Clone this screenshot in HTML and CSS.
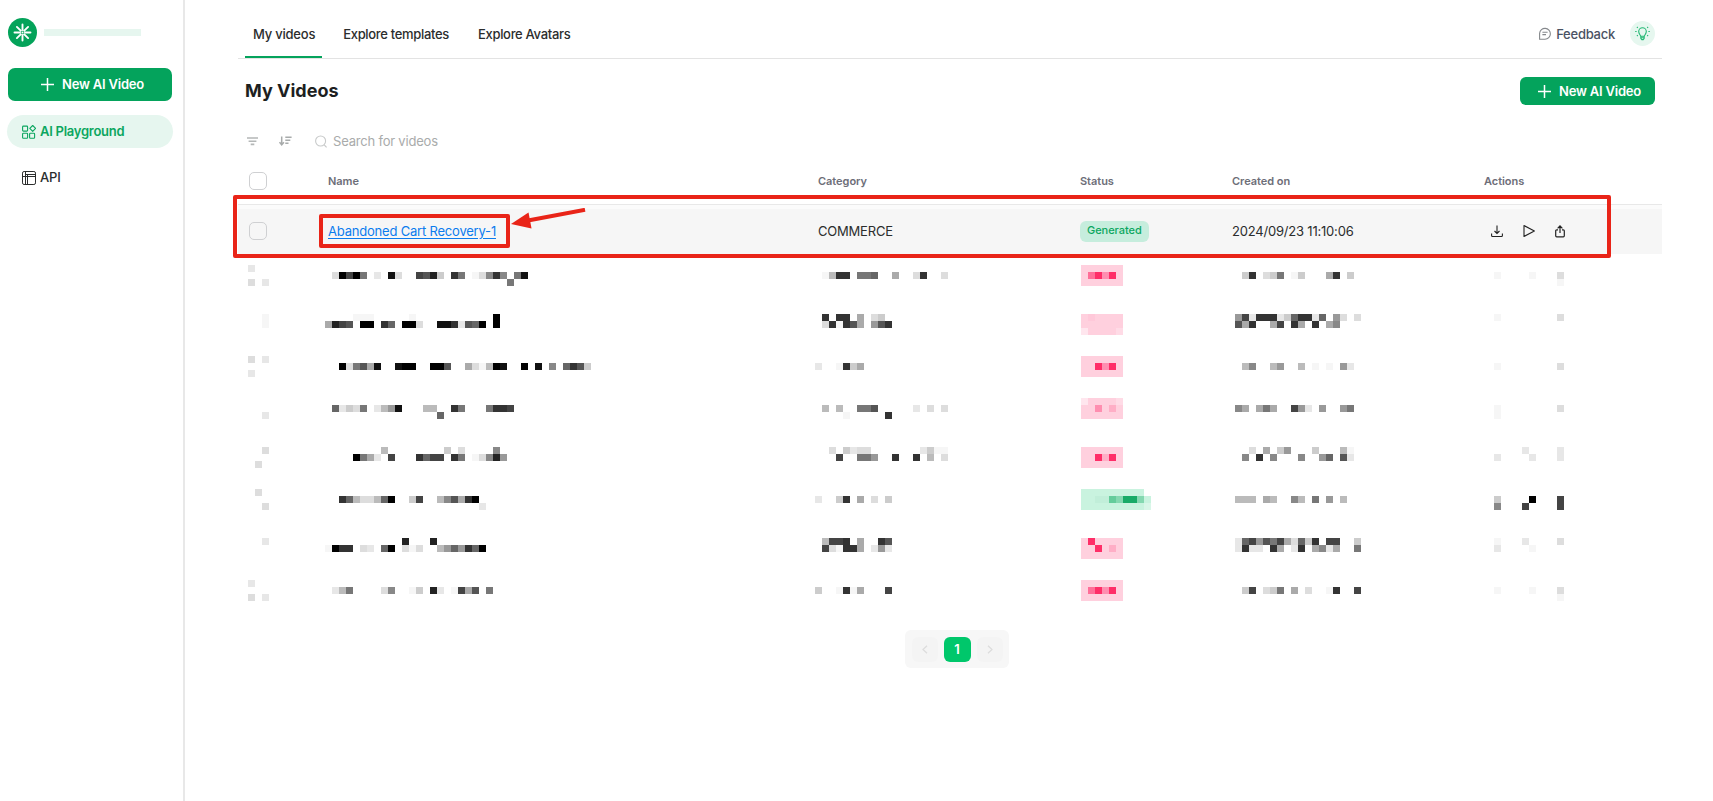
FILE: index.html
```html
<!DOCTYPE html>
<html lang="en">
<head>
<meta charset="utf-8">
<title>My Videos</title>
<link rel="stylesheet" href="styles.css">
</head>
<body>
<aside class="sidebar">
  <div class="brand">
    <svg class="brand-logo" width="29" height="29" viewBox="0 0 29 29"><circle cx="14.5" cy="14.5" r="14.5" fill="#04a35a"/><g stroke="#fff" stroke-width="1.9" stroke-linecap="round"><path d="M14.5 6.500v5.500M14.500 17v5.500M6.500 14.500h5.500M17 14.500h5.500M8.900 8.900l3.800 3.800M16.300 16.300l3.800 3.800M20.100 8.900l-3.800 3.800M12.700 16.300l-3.800 3.800"/></g><circle cx="14.5" cy="14.5" r="1" fill="#fff"/></svg>
    <span class="brand-name"></span>
  </div>
  <button class="btn btn-side"><svg width="13" height="13" viewBox="0 0 13 13"><path d="M6.5 0v13M0 6.5h13" stroke="#fff" stroke-width="1.5"/></svg><span>New AI Video</span></button>
  <a class="nav nav-active"><svg width="14" height="14" viewBox="0 0 14 14" fill="none" stroke="currentColor" stroke-width="1.1"><rect x=".6" y="1.1" width="5" height="5" rx=".8"/><rect x=".6" y="8.3" width="5" height="5" rx=".8"/><rect x="7.600" y="8.3" width="5" height="5" rx=".8"/><path d="M10.700.500l2.900 2.900-2.900 2.900-2.900-2.900z" stroke-linejoin="round"/></svg><span>AI Playground</span></a>
  <a class="nav nav-api"><svg width="14" height="14" viewBox="0 0 14 14" fill="none" stroke="currentColor" stroke-width="1"><rect x=".5" y=".5" width="13" height="13" rx="1.600"/><path d="M.5 5.500h13M3.500.5v13M5.500 3.500v10M3.500 3.500h10"/></svg><span>API</span></a>
</aside>
<main class="main">
  <header class="topbar">
    <nav class="tabs"><a class="tab tab-on">My videos</a><a class="tab">Explore templates</a><a class="tab">Explore Avatars</a></nav>
    <div class="top-right">
      <svg width="12" height="13" viewBox="0 0 12 13" fill="none" stroke="#85888c" stroke-width="1.1"><path d="M.6 12.2V6.3a5.4 5.4 0 1 1 5.4 5.9zM3.4 5.2h5.2M3.4 7.6h3.6"/></svg>
      <span class="feedback">Feedback</span>
      <span class="tip"><svg width="15" height="15" viewBox="0 0 15 15" fill="none" stroke="#22b873" stroke-width="1.1"><path d="M5.7 10.2C5.5 8.9 3.7 8 3.7 5.6a3.8 3.8 0 0 1 7.6 0c0 2.4-1.8 3.3-2 4.6zM5.8 10.2v2.2l1 1.2h1.4l1-1.2v-2.2M5.8 11.8h3.4M.2 5.5h1.4M13.4 5.5h1.4M1.9 1l.9.8M13.1 1l-.9.8M1.9 10l.9-.8M13.1 10l-.9-.8"/></svg></span>
    </div>
  </header>
  <section class="heading">
    <h1>My Videos</h1>
    <button class="btn btn-top"><svg width="13" height="13" viewBox="0 0 13 13"><path d="M6.5 0v13M0 6.5h13" stroke="#fff" stroke-width="1.5"/></svg><span>New AI Video</span></button>
  </section>
  <section class="filters">
    <svg class="i-filter" width="11" height="9" viewBox="0 0 11 9" stroke="#b4b7b7" stroke-width="1.6"><path d="M0 1h11M1.6 4.2h7.8M3.7 7.4h3.6"/></svg>
    <svg class="i-sort" width="13" height="10" viewBox="0 0 13 10" fill="none" stroke="#a8abab" stroke-width="1.5"><path d="M2.7.5v8M.5 6.2l2.2 2.6 2.2-2.6M6.3 1.2H12.6M6.3 4.2h5M6.3 7.3h3.2"/></svg>
    <svg class="i-search" width="12" height="13" viewBox="0 0 12 13" fill="none" stroke="#c8caca" stroke-width="1.1"><circle cx="5.6" cy="6" r="5"/><path d="M9.3 10l2.3 2.3"/></svg>
    <span class="search">Search for videos</span>
  </section>
  <section class="table">
    <div class="row head"><span class="check"></span><span>Name</span><span>Category</span><span>Status</span><span>Created on</span><span>Actions</span></div>
    <div class="band"></div>
    <div class="row item">
      <span class="check"></span><a class="video-link">Abandoned Cart Recovery-1</a><span>COMMERCE</span><b class="badge">Generated</b><span>2024/09/23 11:10:06</span>
      <span class="actions">
        <svg width="12" height="12" viewBox="0 0 12 12" fill="none" stroke="#222" stroke-width="1.1"><path d="M6 .5v8M3.5 6L6 8.5 8.5 6M.6 8.4v2.2q0 .9.9.9h9q.9 0 .9-.9V8.400"/></svg>
        <svg width="12" height="12" viewBox="0 0 12 12" fill="none" stroke="#222" stroke-width="1.1" stroke-linejoin="round"><path d="M1 .6v10.800L11.400 6z"/></svg>
        <svg width="10" height="13" viewBox="0 0 10 13" fill="none" stroke="#222" stroke-width="1.2"><path d="M5 8V1M2.600 3.300L5 .9l2.400 2.400M3 4.800H1.700q-1 0-1 1v5q0 1 1 1h6.600q1 0 1-1v-5q0-1-1-1H7"/></svg>
      </span>
      <div class="mark mark-row"></div>
      <div class="mark mark-name"></div>
      <svg class="arrow" width="76" height="24" viewBox="0 0 76 24"><path d="M17 12.500L74 1.800" stroke="#e92418" stroke-width="4"/><path d="M0 16L17.500 4.500 20.500 20.500z" fill="#e92418"/></svg>
    </div>
    <div id="hidden-rows" class="hidden-rows"></div>
  </section>
  <nav class="pager">
    <span class="page"><svg width="6" height="9" viewBox="0 0 6 9" fill="none" stroke="#dcdcdc" stroke-width="1.2"><path d="M5 .7L1 4.500l4 3.800"/></svg></span>
    <span class="page page-on">1</span>
    <span class="page"><svg width="6" height="9" viewBox="0 0 6 9" fill="none" stroke="#dcdcdc" stroke-width="1.200"><path d="M1 .7l4 3.800-4 3.800"/></svg></span>
  </nav>
</main>
<script src="mosaic.js"></script>
</body>
</html>
```
FILE: styles.css
```css
* { box-sizing: border-box; }
body { margin: 0; display: flex; height: 801px; overflow: hidden; background: #fff; font: 13px/16px Inter, "Liberation Sans", sans-serif; color: #2b2d2d; letter-spacing: -.2px; }
.sidebar { width: 185px; flex: none; border-right: 2px solid #e8e8e8; padding: 18px 11px 0 8px; }
.brand { display: flex; align-items: center; gap: 7px; height: 29px; }
.brand-name { width: 97px; height: 7px; background: #e6f6ef; }
.btn { display: flex; align-items: center; border: 0; background: #04a35c; color: #fff; font: 600 13px/16px Inter, "Liberation Sans", sans-serif; letter-spacing: -.2px; padding: 0; }
.btn span { padding-bottom: 1px; }
.btn-side { width: 164px; height: 33px; margin-top: 21px; border-radius: 7px; padding-left: 33px; gap: 8px; }
.nav { display: flex; align-items: center; font-weight: 500; }
.nav span { padding-bottom: 2px; }
.nav-active { width: 166px; height: 33px; margin: 14px 0 0 -1px; padding: 0 0 0 15px; gap: 4px; border-radius: 17px; background: #e6f6ef; color: #0ca660; font-weight: 600; letter-spacing: -.26px; }
.nav-api { margin: 21px 0 0 14px; height: 18px; gap: 4px; }
.main { width: 1424px; margin-left: 53px; }
.topbar { height: 59px; border-bottom: 1px solid #e3e3e3; display: flex; justify-content: space-between; }
.tabs { display: flex; gap: 14px; padding-left: 7px; }
.tab { height: 58px; padding: 26px 8px 0 7px; font-weight: 500; letter-spacing: -.32px; }
.tab-on { padding-left: 8px; padding-right: 7px; letter-spacing: -.22px; border-bottom: 2px solid #04a35c; }
.top-right { display: flex; align-items: center; padding: 9px 7px 0 0; }
.feedback { margin-left: 5px; font-weight: 500; letter-spacing: -.25px; color: #4a5263; }
.tip { width: 25px; height: 25px; border-radius: 50%; margin-left: 15px; background: #e6f7ef; display: flex; align-items: center; justify-content: center; }
.heading { display: flex; justify-content: space-between; align-items: center; height: 64px; padding: 0 7px; }
h1 { margin: 0; font: 700 18px/24px Inter, "Liberation Sans", sans-serif; letter-spacing: 0; color: #1d1f1f; }
.btn-top { width: 135px; height: 28px; border-radius: 6px; padding-left: 18px; gap: 8px; }
.filters { display: flex; align-items: center; height: 36px; padding-left: 9px; color: #a9abab; }
.search { padding-bottom: 1px; }
.i-sort { margin-left: 21px; }
.i-search { margin: 1px 6px 0 23px; }
.row { display: grid; grid-template-columns: 79px 490px 262px 152px 252px 1fr; align-items: center; padding: 0 0 2px 11px; position: relative; }
.head { height: 45px; font-size: 11px; font-weight: 600; letter-spacing: -.04px; color: #6d6e78; }
.check { width: 18px; height: 18px; border: 1px solid #cfd0d2; border-radius: 5px; }
.band { height: 5px; border-top: 1px solid #e8e8e8; background: #fbfbfb; }
.item { height: 45px; background: #f6f6f6; }
.item .check { margin-top: 1px; }
.video-link { color: #0b7cee; text-decoration: underline; text-underline-offset: 2px; }
.badge { width: fit-content; height: 21px; margin-top: 2px; padding: 0 7px 0 7px; border-radius: 6px; background: #c6eddd; color: #0ca660; font-size: 11px; line-height: 19px; font-weight: 500; letter-spacing: -.05px; }
.actions { display: flex; align-items: center; padding: 1px 0 0 7px; gap: 20px; }
.mark { position: absolute; border: 4px solid #e92418; border-radius: 2px; }
.mark-row { left: -5px; top: -14px; width: 1378px; height: 63px; }
.mark-name { left: 81px; top: 5px; width: 191px; height: 34px; }
.arrow { position: absolute; left: 273px; top: -1px; }
.hidden-rows { padding: 11px 0 0 10px; }
.hidden-row { display: grid; grid-template-columns: 77px 490px 266px 154px 259px 1fr; }
.hidden-row svg { display: block; shape-rendering: crispEdges; }
.pager { display: flex; justify-content: center; align-items: center; gap: 6px; width: 104px; height: 38px; margin: 15px 0 0 667px; border-radius: 6px; background: #f7f7f7; }
.page { display: flex; align-items: center; justify-content: center; width: 26px; height: 25px; border-radius: 6px; background: #f4f4f4; }
.page-on { width: 27px; background: #00c76b; color: #fff; font-weight: 600; }
```
FILE: mosaic.js
```js
// Redacted rows, drawn as 7px blocks. Hex digits are grey levels, letters are badge tints.
const SIZE = 7;
const TINTS = { P: '#ffd0de', U: '#ffc8d9', V: '#ffe6ee', W: '#ffdbe6', Q: '#ff2e68', R: '#ff6e98', S: '#ff8eb0', T: '#ffaec6', G: '#c9f3df', H: '#c1eed9', I: '#64cc9b', J: '#84d8b0', K: '#18ab67', L: '#d9f6e8', f: '#f6f6f6', e: '#e7e7e7' };
// [lines in row, checkbox, name, category, status, created, actions]; "/" parts lines
const ROWS = [
  [6, 'e//d.e', '/.d0407.e.1d..452c.37.fd838.71/..........................7', '/.fb33.776..a..d3..d', 'PPPPPP/PRQSQP/PPPPPP', '/.c3.dc7.fc...a3.c', '/f....f...d/.........f'],
  [7, '/..f/..f', '/....fff.....f...........0/a245.00.36.00d..113e560.0', '/.3.33.a.dc/.d3f35a.953', '/PUPPPP/PPPPPP/VPPPPW', '/94e333ec633e6.9d.d/5a3..a4.3a.3.a8', '/f........d'],
  [6, 'd.e//e', '/..0d75a1..100..005..adfb01..0.1.8.635c', '/e..f3ca', 'PPPPPP/PPQSQP/PPPPPP', '/.b8..b9..b.f.f.9e', '/f........d'],
  [6, '//..e', '/.6ecd7.eb91...bb..37...7334/................6', '/.b.b..775.....e.d.d/....f.....3', 'VPPPPW/PPSPTP/PPPPPP', '/8a.a7a..49e.9..97', '/f........d/f'],
  [7, '/..d//.d', '/........b........c.d....8/....07ae.4...3644.37.fd829', '/..d.cedd.......ecff/...4..779..3..3.b.d', '/PPPPPP/PPQTQP/PPPPPP', '/..d.a.c9...c...bf/.8.3.8...8..96.5e', '/....e....e/e....e...e'],
  [6, '.d//..d', '/..36bddb60..c4..b85a30/......................e', '/e..c3.a.d.c', 'GGGGGGGGG/GGHHIJKKJG/GGGGGGGGGL', '/bbb.ab..8b.7.9.b', '/c....0...4/8...4....4'],
  [7, '/..e', '/...........2...2/f033.de.60.dfd..b969360', '/.b443.a..35/.4df33a.e9e', '/PQPPPP/PPQPTP/PPPPPP', '/e649574ad6c3.44..c/e3ee.3a.e3.a8ea..7', '/f...e....d/e....f'],
  [5, 'e//d.e', '/.eb7....d8..fc.2e.f4a5.7', '/c..f3fa...4', 'PPPPPP/PRQSQP/PPPPPP', '/.c4.dc7.a.d..f3..4', '/f....f...d/.........f']
];
const NS = 'http://www.w3.org/2000/svg';
const host = document.getElementById('hidden-rows');
for (const [lines, ...cells] of ROWS) {
  const row = document.createElement('div');
  row.className = 'hidden-row';
  for (const cell of cells) {
    const svg = document.createElementNS(NS, 'svg');
    const parts = cell.split('/');
    svg.setAttribute('width', Math.max(...parts.map(p => p.length)) * SIZE);
    svg.setAttribute('height', lines * SIZE);
    parts.forEach((part, y) => [...part].forEach((c, x) => {
      if (c === '.') return;
      const r = document.createElementNS(NS, 'rect');
      r.setAttribute('x', x * SIZE);
      r.setAttribute('y', y * SIZE);
      r.setAttribute('width', SIZE);
      r.setAttribute('height', SIZE);
      r.setAttribute('fill', TINTS[c] || '#' + c.repeat(3));
      svg.append(r);
    }));
    row.append(svg);
  }
  host.append(row);
}
```
